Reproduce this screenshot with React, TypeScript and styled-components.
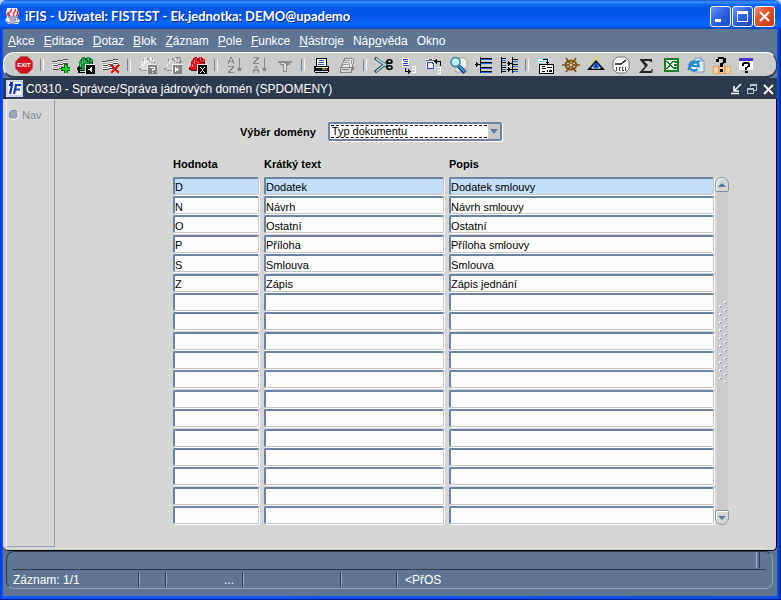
import React from "react";
import styled, { createGlobalStyle } from "styled-components";

const GlobalStyle = createGlobalStyle`
  * { box-sizing: border-box; }
  body { margin: 0; background: #c9d3e8; font-family: "Liberation Sans", Arial, sans-serif; }
  button, input, select { font-family: inherit; margin: 0; }
`;

const slate = "#5e7594";
const navy = "#2d394d";
const panel = "#d6d6d5";

const Window = styled.main`
  display: flex;
  flex-direction: column;
  min-height: 100vh;
  padding: 0 4px 3px 3px;
  background: linear-gradient(90deg, #0733d8, #0a5cf0 3px, #0a4fe6 calc(100% - 3px), #001a9c);
  border-bottom: 1px solid #0018a0;
  border-radius: 7px 7px 0 0;
`;

const TitleBar = styled.header`
  display: flex;
  align-items: center;
  gap: 4px;
  height: 29px;
  margin: 0 -4px 0 -3px;
  padding: 3px 6px 0 5px;
  border-radius: 7px 7px 0 0;
  background: linear-gradient(#1a54d8 0, #3c92ff 2px, #0a63f2 5px, #0256e4 9px, #0559ea 17px, #0a68fc 23px, #0a62f6 26px, #0342c4 29px);
`;

const Title = styled.h1`
  flex: 1;
  margin: 0;
  color: #fff;
  font: bold 13px/20px Lato, "Open Sans", sans-serif;
  text-shadow: 1px 1px #0b2c8c;
  white-space: nowrap;
`;

const CaptionButtons = styled.div`
  display: flex;
  gap: 1px;
`;

const CaptionButton = styled.button<{ $close?: boolean }>`
  width: 21px;
  height: 21px;
  padding: 0;
  border: 1px solid #fff;
  border-radius: 3px;
  background: ${p => (p.$close ? "linear-gradient(135deg,#ef9478,#e0502a 40%,#c83a10)" : "linear-gradient(135deg,#6f9cf8,#2f63e4 45%,#1c48c8)")};
  svg { display: block; }
`;

const MenuBar = styled.nav`
  display: flex;
  gap: 9px;
  height: 23px;
  padding: 0 5px;
  background: ${slate};
`;

const MenuItem = styled.button`
  padding: 0;
  border: 0;
  background: none;
  color: #fff;
  font-size: 12px;
  line-height: 24px;
`;

const ToolShell = styled.div`
  background: ${slate};
`;

const ToolBar = styled.div`
  display: flex;
  align-items: center;
  height: 26px;
  padding-left: 7px;
  border: 1px solid #fff;
  border-right-color: ${navy};
  border-bottom: 2px solid ${navy};
  border-radius: 11px;
  background: #cbcbca;
`;

const Tool = styled.button`
  flex: 0 0 25px;
  display: flex;
  justify-content: center;
  height: 22px;
  padding: 1px 0 0;
  border: 0;
  background: none;
`;

const Divider = styled.span`
  flex: 0 0 12px;
  display: flex;
  justify-content: center;
  &::before {
    content: "";
    width: 2px;
    height: 12px;
    border-left: 1px solid #7185a8;
    border-right: 1px solid #f4f4f4;
  }
`;

const FormTitleBar = styled.div`
  display: flex;
  align-items: center;
  gap: 3px;
  height: 21px;
  padding: 0 2px 0 3px;
  background: ${navy};
`;

const FormTitle = styled.h2`
  flex: 1;
  margin: 0;
  color: #fff;
  font-size: 12px;
  font-weight: normal;
  line-height: 20px;
`;

const FormButton = styled.button`
  width: 13px;
  height: 16px;
  padding: 0;
  border: 0;
  background: none;
  svg { display: block; }
`;

const Body = styled.div`
  flex: 1;
  display: flex;
  padding: 0 0 3px 3px;
  border: solid #000;
  border-width: 0 1px 1px 0;
  border-radius: 0 0 5px 5px;
  background: ${panel};
`;

const BodyShell = styled.div`
  flex: 1;
  display: flex;
  background: ${slate};
`;

const NavPanel = styled.aside`
  flex: 0 0 49px;
  padding: 6px 2px;
  border: 1px solid #94a1b5;
  border-left-color: #f8f8f8;
  border-top-color: #e8e8e8;
`;

const NavRadio = styled.label`
  display: flex;
  align-items: center;
  gap: 3px;
  color: #7d8aa0;
  font-size: 11px;
  line-height: 18px;
  input {
    appearance: none;
    width: 10px;
    height: 10px;
    margin: 0;
    border: 1px solid #71839f;
    border-right-color: #fff;
    border-bottom-color: #fff;
    border-radius: 50%;
    background: #9ca7b8;
  }
`;

const Form = styled.section`
  flex: 1;
  padding: 21px 0 20px 118px;
`;

const Domain = styled.div`
  display: flex;
  align-items: center;
  gap: 12px;
  padding-left: 67px;
  label { font-size: 11px; font-weight: bold; line-height: 20px; padding-top: 2px; }
`;

const SelectBox = styled.div`
  position: relative;
  width: 174px;
  &::before {
    content: "";
    position: absolute;
    top: 3px;
    left: 3px;
    right: 15px;
    bottom: 3px;
    border: dashed #000;
    border-width: 1px 0;
    pointer-events: none;
  }
  svg {
    position: absolute;
    top: 2px;
    right: 2px;
    pointer-events: none;
  }
`;

const Select = styled.select`
  display: block;
  appearance: none;
  width: 100%;
  height: 19px;
  padding: 0 14px 0 2px;
  border: 2px solid #6a82a4;
  border-radius: 2px;
  outline: 0;
  background: #fdfefd;
  box-shadow: 1px 1px #fff;
  color: #000;
  font-size: 11px;
  line-height: 15px;
`;

const Records = styled.div`
  display: flex;
  align-items: flex-end;
  margin-top: 14px;
`;

const Grid = styled.table`
  width: 546px;
  height: 369px;
  border-collapse: collapse;
  table-layout: fixed;
  th {
    height: 20px;
    padding: 0 0 4px;
    text-align: left;
    font-size: 11px;
    line-height: 16px;
  }
  td { padding: 0 5px 0 0; }
`;

const Field = styled.input<{ $current: boolean }>`
  display: block;
  width: 100%;
  height: 18px;
  padding: 2px 0 0;
  border: solid;
  border-width: 2px 1px 1px 2px;
  border-color: #6a82a4 #c4c4c4 #c4c4c4 #6a82a4;
  border-radius: 2px;
  outline: 0;
  background: ${p => (p.$current ? "#c3dffb" : "#fdfefc")};
  box-shadow: 1px 1px #fff;
  color: #000;
  font-size: 11px;
  line-height: 13px;
`;

const Scroller = styled.div`
  display: flex;
  flex-direction: column;
  align-items: center;
  width: 14px;
  height: 348px;
  margin-left: -4px;
`;

const ScrollButton = styled.button<{ $down?: boolean }>`
  width: 14px;
  height: 15px;
  padding: 0;
  border: 1px solid #8795ad;
  border-radius: ${p => (p.$down ? "2px 2px 7px 7px" : "7px 7px 2px 2px")};
  background: ${panel};
  box-shadow: inset 1px 1px #fff;
  svg { display: block; }
`;

const Track = styled.div`
  flex: 1;
  display: flex;
  align-items: center;
  width: 11px;
  padding-bottom: 18px;
  background: #cbcbcb;
`;

const StatusShell = styled.footer`
  padding: 0 4px 7px 3px;
  background: ${slate};
`;

const Status = styled.div`
  padding: 0 6px;
  border: 1px solid #93a5bd;
  border-left-color: ${navy};
  border-top-color: ${navy};
  border-radius: 8px;
`;

const Message = styled.div`
  height: 18px;
  padding-right: 6px;
  border-bottom: 1px solid ${navy};
  &::after {
    content: "";
    display: block;
    height: 16px;
    margin-left: auto;
    width: 2px;
    border-left: 1px solid #a5b3c7;
    border-right: 1px solid ${navy};
  }
`;

const StatusRow = styled.div`
  display: flex;
  align-items: center;
  height: 18px;
  color: #fff;
  font-size: 12px;
`;

const Cell = styled.span<{ $width?: number; $end?: boolean }>`
  flex: ${p => (p.$width ? `0 0 ${p.$width}px` : "1")};
  height: 15px;
  padding-right: 8px;
  padding-left: ${p => (p.$width ? "0" : "8px")};
  text-align: ${p => (p.$end ? "right" : "left")};
  border-right: ${p => (p.$width ? `1px solid ${navy}` : "0")};
  box-shadow: ${p => (p.$width ? "1px 0 #93a5bd" : "none")};
  line-height: 17px;
`;

const Glyph = ({ children, smooth }: { children: React.ReactNode; smooth?: boolean }) => (
  <svg width="20" height="20" viewBox="0 0 20 20" fill="none" shapeRendering={smooth ? "auto" : "crispEdges"} aria-hidden="true">
    {children}
  </svg>
);

const Stripes = () => (
  <>
    <path d="M1 7h6V6h5V5h5v8h-5v1H8v1H2v-2H1z" fill="#efefef" />
    <path d="M1 6h5v1H1zM6 5h6v1H6zM12 4h5v1h-5zM2 10h5v1H2zM7 9h5v1H7zM12 8h5v1h-5zM2 14h6v1H2zM8 13h4v1H8z" fill="#4c4c4c" />
    <path d="M1 8h6v1H1zM7 7h5v1H7zM12 6h5v1h-5zM2 12h5v1H2zM7 11h5v1H7zM12 10h4v1h-4z" fill="#a2a2a2" />
  </>
);

const Cards = ({ fill, edge, spot }: { fill: string; edge: string; spot: string }) => (
  <>
    <path d="M1 14v-2l2-2V7l2-3 1-2h3v1h2V2h3v2h3v8H9v4H3z" fill={fill} />
    <path d="M9 3h2v2H9zM14 3h1v2h-1zM11 5h1v2h-1zM16 6h1v4h-1zM13 7h2v1h-2zM1 13h2v2H1zM3 15h6v1H3zM5 4h1v2H5z" fill={edge} />
    <path d="M6 5h1v4H6zM4 9h1v3H4zM10 7h1v1h-1zM12 3h1v2h-1zM15 5h1v1h-1zM8 6h1v1H8z" fill={spot} />
  </>
);

const Badge = ({ fill, children }: { fill: string; children: React.ReactNode }) => (
  <>
    <path d="M9 9h10v10H9z" fill="#eee" />
    <path d="M10 10h9v9h-9z" fill={fill} />
    {children}
  </>
);

const SortArrow = () => <path d="M14 3h1v13h-1zM12 13h5v1h-5zM13 14h3v2h-3z" fill="#858585" />;

const icons: Record<string, React.ReactNode> = {
  "Konec": (
    <Glyph smooth>
      <path d="M6.500 1.500h7l5 5v7l-5 5h-7l-5-5v-7z" fill="#d3141f" stroke="#aa5960" strokeWidth=".6" />
      <text x="10" y="12" fill="#fff" fontSize="6" fontWeight="bold" textAnchor="middle">EXIT</text>
    </Glyph>
  ),
  "Vložit záznam": <Glyph><Stripes /><path d="M13 9h4v3h2v4h-2v2h-4v-2h-3v-4h3z" fill="#0a6420" /><path d="M14 10h2v3h3v2h-3v3h-2v-3h-3v-2h3z" fill="#12d41e" /></Glyph>,
  "Předchozí": <Glyph><Cards fill="#159447" edge="#073b1b" spot="#43c875" /><path d="M3 11h1v1h1v1h1v1H4v3h5v1H2v-4H1v-1h1v-1h1z" fill="#000" /><Badge fill="#000"><path d="M16 12v5h-1v-1h-1v-1h-2v-1h2v-1h1v-1z" fill="#fff" /></Badge></Glyph>,
  "Smazat záznam": <Glyph><Stripes /><path d="M10 10l8 8M18 10l-8 8" stroke="#dc1212" strokeWidth="2.400" /></Glyph>,
  "Zadat dotaz": <Glyph><Cards fill="#dedede" edge="#999" spot="#fff" /><Badge fill="#858585"><path d="M12 12h5v3h-2v1h-1v-2h2v-1h-4zM14 17h1v1h-1z" fill="#fff" /></Badge></Glyph>,
  "Provést dotaz": <Glyph><Cards fill="#c9c9c9" edge="#939393" spot="#eee" /><path d="M12 2h5v1h1v3h1v1h-1v1h-1V7h-1V6h1V3h-5z" fill="#858585" /><Badge fill="#858585"><path d="M12 12v5h1v-1h2v-1h1v-1h-1v-1h-2v-1z" fill="#fff" /></Badge></Glyph>,
  "Zrušit dotaz": <Glyph><Cards fill="#df1422" edge="#5a1015" spot="#ff7780" /><Badge fill="#000"><path d="M12 12h1v1h1v1h1v-1h1v-1h1v1h-1v1h-1v2h1v1h1v1h-1v-1h-1v-1h-1v1h-1v1h-1v-1h1v-1h1v-2h-1v-1h-1z" fill="#fff" /></Badge></Glyph>,
  "Seřadit vzestupně": <Glyph><path d="M5 2h2v2h1v2h1v3H8V7H4v2H3V6h1V4h1zM5 4v2h2V4zM3 11h6v2H8v1H7v1H6v1H5v1h4v1H3v-2h1v-1h1v-1h1v-1h1v-1H3z" fill="#858585" fillRule="evenodd" /><SortArrow /></Glyph>,
  "Seřadit sestupně": <Glyph><path d="M3 2h6v2H8v1H7v1H6v1H5v1h4v1H3V7h1V6h1V5h1V4h1V3H3zM5 11h2v2h1v2h1v3H8v-2H4v2H3v-3h1v-2h1zM5 13v2h2v-2z" fill="#858585" fillRule="evenodd" /><SortArrow /></Glyph>,
  "Filtr": <Glyph><path d="M3 6h14v2h-2v2h-2v1h-1v6H8v-6H7v-1H5V8H3z" fill="#8e8e8e" /><path d="M6 8h4v1H6zM9 9h2v7H9z" fill="#dcdcdc" /></Glyph>,
  "Tisk": (
    <Glyph>
      <path d="M5 3h9v8H4z" fill="#fff" stroke="#000" />
      <path d="M7 5h5v1H7zM6 7h6v1H6zM6 9h6v1H6z" fill="#315bc0" />
      <path d="M2 11h15v5l-1 2H3l-1-2z" fill="#000" />
      <path d="M4 12h12v1H4zM3 16h13v1H3z" fill="#ddd" />
      <path d="M10 13h3v2h-3z" fill="#19b72c" /><path d="M13 13h2v2h-2z" fill="#e02020" />
    </Glyph>
  ),
  "Tisk sestavy": (
    <Glyph>
      <path d="M8 3h7l2 2-2 8H4z" fill="#e6e6e6" stroke="#888" />
      <path d="M8 5h5v1H8zM7 7h5v1H7zM6 9h5v1H6zM14 5h1v4h-1zM12 8h1v4h-1z" fill="#999" />
      <path d="M3 12h11v5H3z" fill="#d5d5d5" stroke="#858585" /><path d="M5 14h7v1H5zM15 12h2v3h-2z" fill="#808080" />
    </Glyph>
  ),
  "Vyjmout": (
    <Glyph smooth>
      <path d="M1 3l13 9M1 17L14 7" stroke="#234" strokeWidth="3" />
      <path d="M2 3.500l10 7M2 16.500l10-8" stroke="#b9e4e2" strokeWidth="1.600" />
      <ellipse cx="15.500" cy="6.500" rx="2.500" ry="1.800" stroke="#000" strokeWidth="1.600" />
      <ellipse cx="15.500" cy="12.500" rx="2.500" ry="1.800" stroke="#000" strokeWidth="1.600" />
    </Glyph>
  ),
  "Kopírovat": (
    <Glyph>
      <path d="M3 3h7v9H3z" fill="#fff" /><path d="M4 4h5v1H4zM5 6h4v1H5zM4 8h5v1H4zM4 10h6v1H4zM4 4h1v2H4z" fill="#2746cf" />
      <path d="M6 13h1v3h2v-2h1v1h1v1h1v1h-1v1h-1v1H9v-2H6z" fill="#000" /><path d="M13 11h4v7h-4v-1h3v-2h-3v-1h3v-2h-3z" fill="#fff" />
    </Glyph>
  ),
  "Vložit": (
    <Glyph>
      <path d="M2 4h9v10H2z" fill="#eee" /><path d="M2 5h3V4h3v1h3v1H2z" fill="#666" /><path d="M3 7h6v1h1v6H3zM4 8v5h5V9H8V8z" fill="#2746cf" fillRule="evenodd" />
      <path d="M12 4h1v2h4v5h-1V7h-3v2h-1V8h-1V7h-1V6h1V5h1z" fill="#000" /><path d="M13 12h4v7h-4v-1h3v-2h-3v-1h3v-2h-3z" fill="#fff" />
    </Glyph>
  ),
  "Hledat": (
    <Glyph smooth>
      <path d="M7 3h8l3 3v11H7z" fill="#f1efe6" stroke="#a7a7a7" /><path d="M12 12h5v5h-5z" fill="#d7c994" />
      <circle cx="6.500" cy="7" r="4.500" fill="#b9f1f3" stroke="#3c7f9f" strokeWidth="1.500" />
      <path d="M4 7l4-3" stroke="#fff" /><path d="M9.500 11l6.500 6.500" stroke="#123e8f" strokeWidth="4" /><path d="M10 11l5.500 5.500" stroke="#33a0ec" strokeWidth="2" />
    </Glyph>
  ),
  "Seznam hodnot": <Glyph><path d="M6 2h1v16H6zM7 3h11v1H7zM7 7h11v1H7zM7 12h11v1H7zM7 16h11v1H7zM1 9h5v1H1zM2 7h1v5H2zM3 8h1v3H3z" fill="#000" /><path d="M7 4h11v1H7zM7 8h11v1H7zM7 13h11v1H7zM7 17h11v1H7z" fill="#2d63d8" /></Glyph>,
  "Seznam vazeb": <Glyph><path d="M2 2h1v16H2zM13 2h1v16h-1zM3 3h4v1H3zM3 7h4v1H3zM3 12h4v1H3zM3 16h4v1H3zM14 4h5v1h-5zM14 9h5v1h-5zM14 14h5v1h-5zM8 8h5v1H8zM9 6h1v5H9zM10 7h1v3h-1zM8 14h5v1H8zM9 12h1v5H9zM10 13h1v3h-1z" fill="#000" /><path d="M3 5h4v1H3zM3 10h4v1H3zM3 14h4v1H3zM14 6h5v1h-5zM14 11h5v1h-5zM14 16h5v1h-5z" fill="#2d63d8" /></Glyph>,
  "Formulář": (
    <Glyph>
      <path d="M2 3h11v5H2z" fill="#f4fbfd" /><path d="M1 3h12v1H1zM3 6h8v1H3z" fill="#85cce5" />
      <path d="M3 9h15v10H3z" fill="#000" /><path d="M4 10h13v8H4z" fill="#fff" />
      <path d="M6 11h3v1H6zM6 13h4v1H6zM6 16h3v1H6zM11 12h5v1h-5zM11 15h1v2h-1zM13 15h3v2h-3zM7 4h5v3h1v1h-1v1h-1V8h-1V7h1V5H7z" fill="#000" />
    </Glyph>
  ),
  "Navigace": <Glyph smooth><ellipse cx="10" cy="10" rx="5.500" ry="4.500" stroke="#80500b" strokeWidth="1.800" /><path d="M1 10h18M5 3l10 14M15 3L5 17" stroke="#80500b" strokeWidth="1.500" /><circle cx="10" cy="10" r="2" fill="#cbcbca" stroke="#80500b" /></Glyph>,
  "Zobrazit": <Glyph smooth><path d="M1 15L10 5l9 10z" fill="#111" /><path d="M3 7l3 2M6 3l2 3M10 1v3M14 3l-2 3M17 7l-3 2" stroke="#ded643" /><path d="M5 13q5-6 10 0-5 2-10 0" fill="#fff" /><circle cx="10" cy="11" r="3" fill="#1664e8" /><circle cx="10" cy="11" r="1" fill="#00174a" /></Glyph>,
  "Čas": <Glyph smooth><path d="M6 2h8l4 4v8l-4 4H6l-4-4V6z" fill="#f5f5f5" stroke="#777" /><path d="M4 9h6l5-4" stroke="#222" strokeWidth="1.500" /><path d="M5.500 12v4M8.500 12v4M11.500 12v4M14.500 12v4M8 12.500h2M11 15.500h2" stroke="#444" /></Glyph>,
  "Součet": <Glyph smooth><path d="M4 4h12v3h-1l-1-1H8l4 4-5 6h8l1-2h1l-1 4H3l6-7-5-6z" fill="#222" /></Glyph>,
  "Export do Excelu": <Glyph><path d="M3 3h15v14H3z" fill="#187e2e" /><path d="M5 5h11v10H5z" fill="#eef6ee" /><path d="M6 6l7 8M12 6l-6 8M13 7h3M13 10h3M13 13h3" stroke="#187e2e" strokeWidth="1.600" /></Glyph>,
  "Prohlížeč": <Glyph smooth><path d="M9 3h6l3 3v11H8z" fill="#dce9fb" stroke="#7c9dcc" /><path d="M15 3v3h3" stroke="#7c9dcc" /><circle cx="8" cy="11" r="4.500" fill="#eaf6ff" stroke="#218ecb" strokeWidth="2.500" /><path d="M5 11h7M2 15q4-8 12-9" stroke="#218ecb" strokeWidth="1.800" /><path d="M11 12.500h4v2h-4z" fill="#dce9fb" /></Glyph>,
  "Nápověda k poli": <Glyph><path d="M2 11h5v7H2zM8 10h5v8H8zM14 11h5v7h-5z" fill="#f6d4a2" stroke="#dda76b" /><path d="M7 2h6v1h2v5h-2v1h-1v3H9V8h2V7h1V4H8v3H5V4h2zM9 14h3v3H9z" fill="#000" /></Glyph>,
  "Nápověda": <Glyph><path d="M3 4h14v11H3z" fill="#fff" /><path d="M3 3h14v3H3z" fill="#4930ce" /><path d="M7 7h6v1h1v4h-2v1h-1v2H9v-3h2v-1h1V9H8v2H6V8h1zM9 16h3v2H9z" fill="#000" /></Glyph>,
};

const toolGroups: string[][] = [
  ["Konec"],
  ["Vložit záznam", "Předchozí", "Smazat záznam"],
  ["Zadat dotaz", "Provést dotaz", "Zrušit dotaz"],
  ["Seřadit vzestupně", "Seřadit sestupně", "Filtr"],
  ["Tisk", "Tisk sestavy"],
  ["Vyjmout", "Kopírovat", "Vložit", "Hledat", "Seznam hodnot", "Seznam vazeb"],
  ["Formulář", "Navigace", "Zobrazit", "Čas", "Součet", "Export do Excelu", "Prohlížeč", "Nápověda k poli", "Nápověda"],
];

const menus: [string, string, string][] = [
  ["", "A", "kce"],
  ["", "E", "ditace"],
  ["", "D", "otaz"],
  ["", "B", "lok"],
  ["", "Z", "áznam"],
  ["", "P", "ole"],
  ["", "F", "unkce"],
  ["", "N", "ástroje"],
  ["Náp", "o", "věda"],
  ["Okno", "", ""],
];

const columns = ["Hodnota", "Krátký text", "Popis"];

const filled = [
  ["D", "Dodatek", "Dodatek smlouvy"],
  ["N", "Návrh", "Návrh smlouvy"],
  ["O", "Ostatní", "Ostatní"],
  ["P", "Příloha", "Příloha smlouvy"],
  ["S", "Smlouva", "Smlouva"],
  ["Z", "Zápis", "Zápis jednání"],
];

const rows = [...filled, ...Array.from({ length: 12 }, () => ["", "", ""])];

const JavaCup = () => (
  <svg width="16" height="17" viewBox="0 0 16 17" fill="none" aria-hidden="true">
    <path d="M2 0h10l2 5-2 5 3 2-2 4H3l-3-4 2-3-1-4z" fill="#f5eef3" />
    <path d="M5 8C1 5 8 4 6 1M9 8c-3-3 3-4 1-7M4 4q-3 2 0 4M12 3q2 3-1 5" stroke="#df3545" strokeWidth="1.500" />
    <path d="M3 9h8M4 11h7l-1 2H5M11 9q4 0 1 3M1 14q6 3 12 0" stroke="#5b6790" />
  </svg>
);

const IfLogo = () => (
  <svg width="17" height="17" viewBox="0 0 17 17" aria-hidden="true">
    <path d="M0 0h17v17H0z" fill="#f4f7ff" />
    <path d="M1 1h15v15H1z" stroke="#9ab8e8" fill="none" />
    <path d="M3 5h3L4 14M8 14l2-9h5M9 9.500h5" stroke="#1736b8" strokeWidth="2.200" fill="none" />
    <path d="M4 2h3v2H4z" fill="#1736b8" />
  </svg>
);

const Dots = () => (
  <svg width="11" height="82" viewBox="0 0 11 82" shapeRendering="crispEdges" aria-hidden="true">
    {Array.from({ length: 21 }, (_, i) => {
      const x = i % 2 ? 2 : 7;
      const y = i * 4;
      return (
        <g key={i}>
          <path d={`M${x} ${y}h2v2h-2z`} fill="#fff" />
          <path d={`M${x + 1} ${y + 1}h2v1h-1v1h-1z`} fill="#93a0ba" />
        </g>
      );
    })}
  </svg>
);

export default function App() {
  return (
    <>
      <GlobalStyle />
      <Window>
        <TitleBar>
          <JavaCup />
          <Title>iFIS - Uživatel: FISTEST - Ek.jednotka: DEMO@upademo</Title>
          <CaptionButtons>
            <CaptionButton aria-label="Minimalizovat">
              <svg width="19" height="19" viewBox="0 0 19 19"><path d="M4 12h6v3H4z" fill="#fff" /></svg>
            </CaptionButton>
            <CaptionButton aria-label="Maximalizovat">
              <svg width="19" height="19" viewBox="0 0 19 19"><path d="M4 4h11v11H4zM5 7v7h9V7z" fill="#fff" fillRule="evenodd" /></svg>
            </CaptionButton>
            <CaptionButton $close aria-label="Zavřít">
              <svg width="19" height="19" viewBox="0 0 19 19"><path d="M5 5l9 9M14 5l-9 9" stroke="#fff" strokeWidth="2.200" /></svg>
            </CaptionButton>
          </CaptionButtons>
        </TitleBar>

        <MenuBar>
          {menus.map(([before, key, after]) => (
            <MenuItem key={before + key + after}>{before}{key && <u>{key}</u>}{after}</MenuItem>
          ))}
        </MenuBar>

        <ToolShell>
          <ToolBar role="toolbar">
            {toolGroups.map((group, i) => (
              <React.Fragment key={group[0]}>
                {i > 0 && <Divider />}
                {group.map(name => <Tool key={name} aria-label={name}>{icons[name]}</Tool>)}
              </React.Fragment>
            ))}
          </ToolBar>
        </ToolShell>

        <FormTitleBar>
          <IfLogo />
          <FormTitle>C0310 - Správce/Správa jádrových domén (SPDOMENY)</FormTitle>
          <FormButton aria-label="Minimalizovat formulář">
            <svg width="13" height="16" viewBox="0 0 13 16" fill="none" stroke="#fff" strokeWidth="1.500"><path d="M11 3L5 9M4 5v5h5M1 12.500h8" /></svg>
          </FormButton>
          <FormButton aria-label="Obnovit formulář">
            <svg width="13" height="16" viewBox="0 0 13 16" fill="none" stroke="#bfc4cc" shapeRendering="crispEdges"><path d="M4.500 6V3.500h6v6H8M4 4.500h7M1.500 7.500h6v5h-6zM1 8.500h7" /></svg>
          </FormButton>
          <FormButton aria-label="Zavřít formulář">
            <svg width="13" height="16" viewBox="0 0 13 16" stroke="#fff" strokeWidth="1.800"><path d="M2 4l9 9M11 4l-9 9" /></svg>
          </FormButton>
        </FormTitleBar>

        <BodyShell>
          <Body>
            <NavPanel>
              <NavRadio><input type="radio" name="nav" />Nav</NavRadio>
            </NavPanel>
            <Form>
              <Domain>
                <label htmlFor="domain">Výběr domény</label>
                <SelectBox>
                  <Select id="domain"><option>Typ dokumentu</option></Select>
                  <svg width="12" height="15" viewBox="0 0 12 15"><path d="M0 0h12v15H0z" fill="#c9c9c9" /><path d="M2 5h8L6 10z" fill="#5c7698" /></svg>
                </SelectBox>
              </Domain>
              <Records>
                <Grid>
                  <colgroup><col width="91" /><col width="185" /><col width="270" /></colgroup>
                  <thead>
                    <tr>{columns.map(c => <th key={c} scope="col">{c}</th>)}</tr>
                  </thead>
                  <tbody>
                    {rows.map((row, r) => (
                      <tr key={r}>
                        {row.map((value, c) => (
                          <td key={c}><Field $current={r === 0} defaultValue={value} aria-label={`${columns[c]} ${r + 1}`} /></td>
                        ))}
                      </tr>
                    ))}
                  </tbody>
                </Grid>
                <Scroller>
                  <ScrollButton aria-label="Nahoru"><svg width="12" height="13" viewBox="0 0 12 13"><path d="M2 9h8L6 5z" fill="#5c7698" /></svg></ScrollButton>
                  <Track><Dots /></Track>
                  <ScrollButton $down aria-label="Dolů"><svg width="12" height="13" viewBox="0 0 12 13"><path d="M2 5h8L6 9z" fill="#5c7698" /></svg></ScrollButton>
                </Scroller>
              </Records>
            </Form>
          </Body>
        </BodyShell>

        <StatusShell>
          <Status>
            <Message />
            <StatusRow>
              <Cell $width={126}>Záznam: 1/1</Cell>
              <Cell $width={27} />
              <Cell $width={77} $end>...</Cell>
              <Cell $width={98} />
              <Cell $width={56} />
              <Cell>&lt;PřOS</Cell>
            </StatusRow>
          </Status>
        </StatusShell>
      </Window>
    </>
  );
}
